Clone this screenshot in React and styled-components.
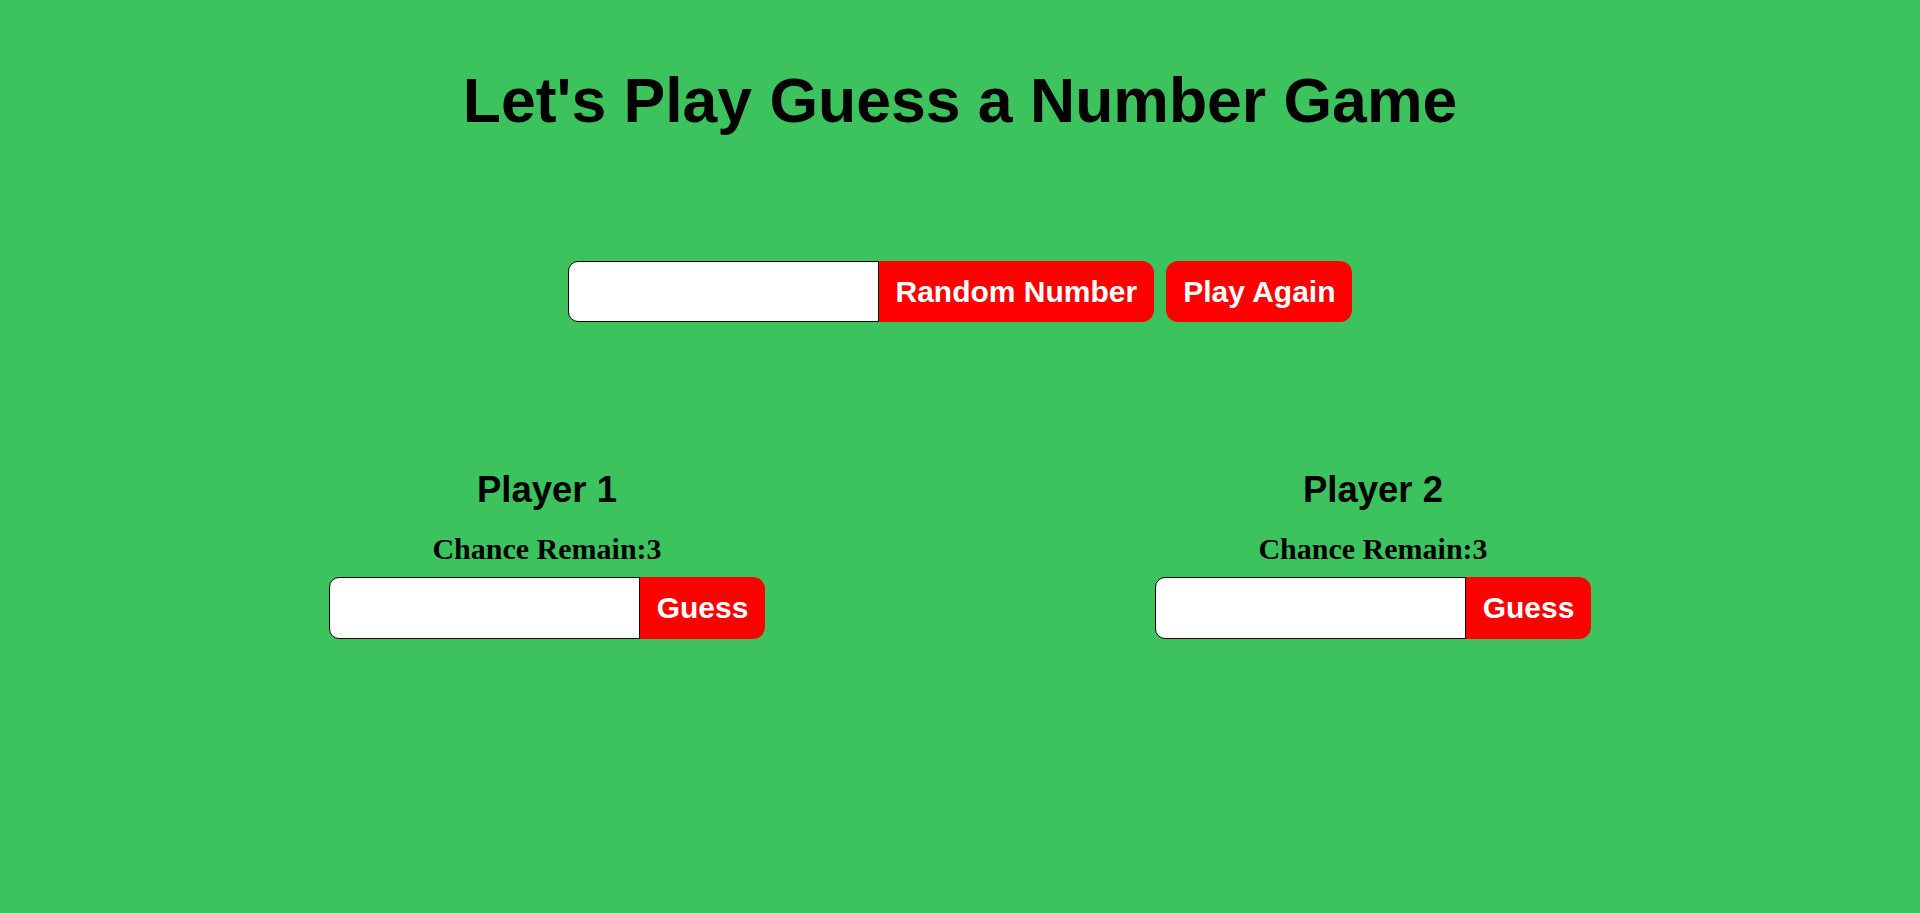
import React, { useState } from "react";
import styled, { createGlobalStyle } from "styled-components";

const GlobalStyle = createGlobalStyle`
  html, body {
    margin: 0;
    padding: 0;
    background: #3dc35e;
  }
  body {
    min-height: 913px;
    font-family: "Liberation Sans", Arial, sans-serif;
  }
`;

const Page = styled.main`
  display: flex;
  flex-direction: column;
  align-items: center;
  padding-top: 64px;
`;

const Title = styled.h1`
  margin: 0;
  font-size: 62.5px;
  line-height: 72px;
  font-weight: 700;
  color: #000;
`;

const Controls = styled.div`
  display: flex;
  align-items: stretch;
  gap: 12px;
  margin-top: 125px;
`;

const InputGroup = styled.div`
  display: flex;
  height: ${(p) => p.$height}px;
`;

const NumberInput = styled.input`
  box-sizing: border-box;
  width: 311px;
  height: 100%;
  margin: 0;
  border: 1px solid #000;
  border-radius: 10px 0 0 10px;
  background: #fff;
  font-size: 24px;
  font-family: "Liberation Sans", Arial, sans-serif;
  padding: 0 12px;
  outline: none;
`;

const RedButton = styled.button`
  box-sizing: border-box;
  height: ${(p) => p.$height || 61}px;
  margin: 0;
  padding: 0 17px;
  border: none;
  border-radius: ${(p) => (p.$attached ? "0 12px 12px 0" : "12px")};
  background: #ff0000;
  color: #fff;
  font-family: "Liberation Sans", Arial, sans-serif;
  font-size: 30px;
  font-weight: 700;
  cursor: pointer;
`;

const Players = styled.section`
  width: 100%;
  display: flex;
  justify-content: space-evenly;
  margin-top: 147px;
`;

const PlayerCard = styled.div`
  width: 558px;
  display: flex;
  flex-direction: column;
  align-items: center;
`;

const PlayerName = styled.h2`
  margin: 0;
  font-size: 36.5px;
  line-height: 42px;
  font-weight: 700;
`;

const Chances = styled.h3`
  margin: 20px 0 0;
  font-family: "Liberation Serif", "Times New Roman", serif;
  font-size: 30px;
  line-height: 35px;
  font-weight: 700;
`;

const GuessRow = styled.div`
  margin-top: 11px;
`;

const Player = ({ name, chances }) => {
  const [value, setValue] = useState("");
  return (
    <PlayerCard>
      <PlayerName>{name}</PlayerName>
      <Chances>Chance Remain:{chances}</Chances>
      <GuessRow>
        <InputGroup $height={62}>
          <NumberInput value={value} onChange={(e) => setValue(e.target.value)} />
          <RedButton $attached $height={62}>Guess</RedButton>
        </InputGroup>
      </GuessRow>
    </PlayerCard>
  );
};

const App = () => {
  const [target] = useState("");

  return (
    <>
      <GlobalStyle />
      <Page>
        <Title>Let's Play Guess a Number Game</Title>
        <Controls>
          <InputGroup $height={61}>
            <NumberInput value={target} readOnly />
            <RedButton $attached>Random Number</RedButton>
          </InputGroup>
          <RedButton>Play Again</RedButton>
        </Controls>
        <Players>
          <Player name="Player 1" chances={3} />
          <Player name="Player 2" chances={3} />
        </Players>
      </Page>
    </>
  );
};

export default App;
